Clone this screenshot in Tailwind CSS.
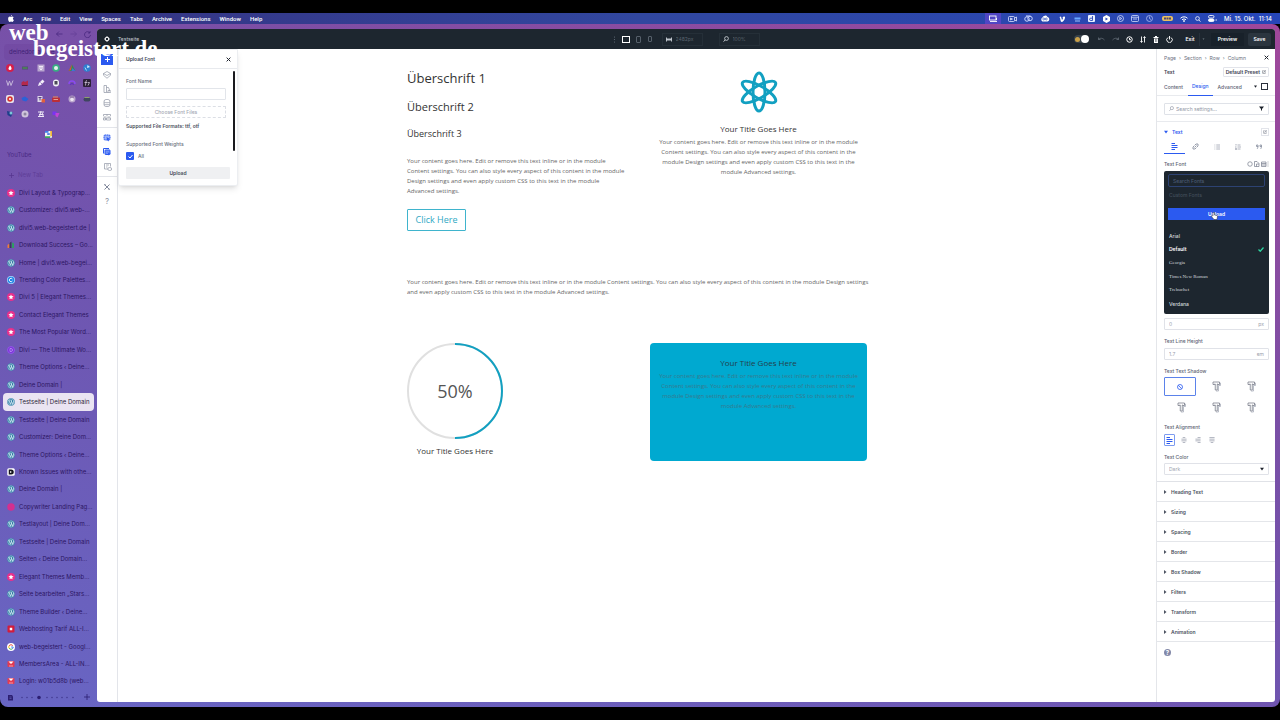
<!DOCTYPE html>
<html lang="de">
<head>
<meta charset="utf-8">
<meta name="viewport" content="width=device-width, initial-scale=1">
<title>Testseite | Deine Domain</title>
<script src="https://cdn.jsdelivr.net/npm/@tailwindcss/browser@4"></script>
</head>
<body class="bg-black font-['Inter',sans-serif] text-[5px] leading-[8px]">

<!-- Icon sprite -->
<svg class="hidden" aria-hidden="true">
  <symbol id="wp" viewBox="0 0 16 16"><circle cx="8" cy="8" r="7.5" fill="#2b7aa3"/><circle cx="8" cy="8" r="6.3" fill="none" stroke="#c7e3ee" stroke-width="1.1"/><path d="M3 5.3h2.6M4.2 5.3l2.6 7.2 2-5.6M7 5.3h3M8.4 5.3l2.6 7.2 1.9-5.2c.4-1.4-.5-2.2-1.2-2.6" fill="none" stroke="#e4f3f8" stroke-width="1.5"/></symbol>
  <symbol id="star" viewBox="0 0 16 16"><circle cx="8" cy="8" r="8" fill="#e8308c"/><path d="M8 2.8l1.5 3.4 3.7.3-2.8 2.5.8 3.7L8 10.800l-3.200 1.900.8-3.700L2.800 6.500l3.700-.3z" fill="#fff"/></symbol>
  <symbol id="pink" viewBox="0 0 16 16"><circle cx="8" cy="8" r="7.500" fill="#d42f8f"/></symbol>
  <symbol id="bars" viewBox="0 0 16 16"><path d="M1 14V8l4-3v9z" fill="#ef7b3c"/><path d="M5 14V4l4-3v13z" fill="#3a3a5c"/><path d="M10 14V3l4 2v9z" fill="#2f9e62"/></symbol>
  <symbol id="coolors" viewBox="0 0 16 16"><circle cx="8" cy="8" r="8" fill="#a8ddff"/><circle cx="8" cy="8" r="6.500" fill="#2384e6"/><path d="M10.800 6a3.400 3.400 0 1 0 0 4" fill="none" stroke="#fff" stroke-width="1.800"/></symbol>
  <symbol id="divi" viewBox="0 0 16 16"><circle cx="8" cy="8" r="7" fill="#7b35d6" stroke="#9a5cf0" stroke-width="1.500"/><path d="M6 5h2a3 3 0 0 1 0 6H6z" fill="none" stroke="#c9a4ff" stroke-width="1.300"/></symbol>
  <symbol id="known" viewBox="0 0 16 16"><rect x=".5" y=".5" width="15" height="15" rx="3" fill="#fff"/><path d="M3.500 3h5a5 5 0 0 1 0 10h-5z" fill="#16161e"/><path d="M6 6l4 2-4 2z" fill="#fff"/></symbol>
  <symbol id="host" viewBox="0 0 16 16"><rect x="1" y="1" width="14" height="14" rx="2" fill="#d21c3c"/><rect x="5.500" y="5.500" width="5" height="5" fill="#fff"/></symbol>
  <symbol id="google" viewBox="0 0 16 16"><circle cx="8" cy="8" r="8" fill="#fff"/><path d="M11.500 5.200A4.500 4.500 0 0 0 4 6" fill="none" stroke="#ea4335" stroke-width="2"/><path d="M4 6a4.500 4.500 0 0 0 0 4" fill="none" stroke="#fbbc05" stroke-width="2"/><path d="M4 10a4.500 4.500 0 0 0 7 1.300" fill="none" stroke="#34a853" stroke-width="2"/><path d="M11 11.300c1-1 1.400-2 1.400-3.300H8.300" fill="none" stroke="#4285f4" stroke-width="2"/></symbol>
  <symbol id="members" viewBox="0 0 16 16"><rect x="1" y="2" width="14" height="12" rx="2" fill="#e23a52"/><path d="M3 3l5 5 5-5z" fill="#fff"/><path d="M4 12h8" stroke="#fff" stroke-width="1"/></symbol>
  <symbol id="left" viewBox="0 0 14 14"><path d="M1 1h7M1 5h12M1 9h12M1 13h7" stroke="currentColor" stroke-width="2"/></symbol>
  <symbol id="center" viewBox="0 0 14 14"><path d="M4 1h6M1 5h12M1 9h12M4 13h6" stroke="currentColor" stroke-width="1.600"/></symbol>
  <symbol id="right" viewBox="0 0 14 14"><path d="M6 1h7M1 5h12M1 9h12M6 13h7" stroke="currentColor" stroke-width="1.600"/></symbol>
  <symbol id="justify" viewBox="0 0 14 14"><path d="M1 1h12M1 5h12M1 9h12M4 13h6" stroke="currentColor" stroke-width="1.600"/></symbol>
  <symbol id="tri" viewBox="0 0 8 8"><path d="M2 0l5 4-5 4z" fill="currentColor"/></symbol>
  <symbol id="down" viewBox="0 0 8 8"><path d="M0 1.500h8L4 7z" fill="currentColor"/></symbol>
  <symbol id="close" viewBox="0 0 8 8"><path d="M1 1l6 6M7 1L1 7" stroke="currentColor" stroke-width="1.600"/></symbol>
  <symbol id="preset" viewBox="0 0 12 12"><path d="M5 2H2v8h8V7M5 7l5-5M7 2h3v3" fill="none" stroke="currentColor" stroke-width="1.400"/></symbol>
  <symbol id="search" viewBox="0 0 12 12"><circle cx="7" cy="5" r="3.800" fill="none" stroke="currentColor" stroke-width="1.500"/><path d="M4.500 8L1 11" stroke="currentColor" stroke-width="1.700"/></symbol>
  <symbol id="shadowT" viewBox="0 0 18 22"><path d="M4 4h13v5h-4v11H8" fill="none" stroke="#a9aebb" stroke-width="1.600"/><path d="M2 2h13v5h-3V6h-1.500v12h-4V6H5v1H2z" fill="#fff" stroke="#6a6f7d" stroke-width="1.400"/></symbol>
</svg>

<div class="relative flex min-h-screen flex-col py-[13px]">

  <!-- macOS menu bar -->
  <header class="flex h-[11px] items-center justify-between bg-linear-to-r from-[#35317f] via-[#31479f] to-[#2646b8] pr-[8px] pl-[8px] font-['Roboto',sans-serif] text-[6px] font-medium text-white">
    <nav class="flex items-center gap-[9px]" aria-label="Menüleiste">
      <svg class="h-[7px] w-[6px]" viewBox="0 0 14 17" fill="#fff"><path d="M9.500 0c.2 1.800-1.300 3.400-2.900 3.400C6.400 1.700 8 .2 9.500 0zM7 4.600c.7 0 1.800-.8 3.300-.8 1.300 0 2.500.7 3.200 1.700-2.800 1.700-2.300 5.500.5 6.600-.8 2-2.200 4.600-3.900 4.600-1.200 0-1.500-.7-3-.7s-1.900.7-3.100.7C1.800 16.700 0 13 0 9.500c0-3.700 2.300-5.600 4.300-5.600 1.200 0 2.100.7 2.700.7z"/></svg>
      <a href="#" class="font-bold">Arc</a><a href="#">File</a><a href="#">Edit</a><a href="#">View</a><a href="#">Spaces</a><a href="#">Tabs</a><a href="#">Archive</a><a href="#">Extensions</a><a href="#">Window</a><a href="#">Help</a>
    </nav>
    <div class="flex items-center gap-[7px]">
      <span class="flex h-[11px] w-[16px] items-center justify-center bg-[#5046c4]"><svg class="h-[7px] w-[9px]" viewBox="0 0 18 14" fill="none" stroke="#fff" stroke-width="1.800"><rect x="1" y="2" width="13" height="8"/><path d="M2 13h14M15 6v4"/></svg></span>
      <svg class="h-[6px] w-[9px]" viewBox="0 0 18 12" fill="none" stroke="#dfe5ff" stroke-width="1.600"><rect x="1" y="1" width="12" height="10" rx="2"/><path d="M13 4l4-2v8l-4-2M5 4l4 2-4 2z"/></svg>
      <svg class="h-[7px] w-[9px]" viewBox="0 0 18 14" fill="none" stroke="#c9d4ff" stroke-width="2"><circle cx="6" cy="8" r="4.500"/><circle cx="12" cy="7" r="4.500"/><path d="M4 2h9"/></svg>
      <svg class="h-[7px] w-[10px]" viewBox="0 0 20 14"><path d="M5 13a4.500 4.500 0 0 1 0-8 5.500 5.500 0 0 1 10-1 4.600 4.600 0 0 1 0 9z" fill="#fff"/><circle cx="7.500" cy="8" r="2" fill="none" stroke="#2b48b4" stroke-width="1.300"/><circle cx="12.500" cy="8" r="2" fill="none" stroke="#2b48b4" stroke-width="1.300"/></svg>
      <svg class="ml-[2px] h-[6px] w-[7px]" viewBox="0 0 14 12"><path d="M1 2l3-1 2 7c2-2 2.500-4 1-5 2-3 6-2 5 1-1 4-4 8-7 8-2 0-2-5-3-8z" fill="#fff"/></svg>
      <svg class="ml-[1px] h-[6px] w-[7px]" viewBox="0 0 14 12"><path d="M1 3h12v4H1z" fill="#6aa8ff"/><path d="M2 10h10" stroke="#9fc3ff" stroke-width="2"/></svg>
      <svg class="h-[7px] w-[7px]" viewBox="0 0 14 14"><rect width="14" height="14" rx="2" fill="#e9efff"/><path d="M9 2v9H5.500a2.300 2.300 0 0 1 0-4.600H9" fill="none" stroke="#2946b4" stroke-width="1.800"/></svg>
      <svg class="ml-[1px] h-[8px] w-[7px]" viewBox="0 0 14 16"><path d="M7 0l7 4v8l-7 4-7-4V4z" fill="#fff"/><path d="M5 5l5 3-5 3z" fill="#2946b4"/></svg>
      <svg class="h-[7px] w-[7px]" viewBox="0 0 14 14" fill="none" stroke="#dfe5ff" stroke-width="1.500"><circle cx="7" cy="7" r="6"/><path d="M5.500 4.500l4 2.500-4 2.500z"/></svg>
      <svg class="h-[7px] w-[8px]" viewBox="0 0 16 14" fill="none" stroke="#dfe5ff" stroke-width="1.500"><rect x="1" y="1" width="14" height="12" rx="2"/><path d="M1 4.500h14M4 8h8"/></svg>
      <svg class="h-[7px] w-[7px]" viewBox="0 0 14 14" fill="none" stroke="#b7c3f5" stroke-width="1.500"><circle cx="7" cy="7" r="6"/><path d="M7 3v4l3 2"/></svg>
      <span class="ml-[2px] flex h-[5px] w-[11px] items-center justify-center rounded-[2px] bg-[#e8c061]"><svg class="h-[3px] w-[7px]" viewBox="0 0 14 6"><path d="M0 3h4M5 3h4M10 3h4" stroke="#4d4673" stroke-width="4"/></svg></span>
      <svg class="h-[6px] w-[8px]" viewBox="0 0 16 12" fill="none" stroke="#fff" stroke-width="2"><path d="M1 4.500a10 10 0 0 1 14 0M4 7.500a6 6 0 0 1 8 0"/><circle cx="8" cy="10" r="1" fill="#fff"/></svg>
      <svg class="h-[6px] w-[6px] -scale-x-100" viewBox="0 0 12 12"><use href="#search" color="#fff"/></svg>
      <svg class="h-[7px] w-[9px]" viewBox="0 0 18 14" fill="none" stroke="#fff" stroke-width="1.700"><rect x="1" y="1" width="11" height="5" rx="2.500"/><rect x="1" y="8" width="11" height="5" rx="2.500" fill="#fff"/><path d="M15 10h3"/></svg>
      <span class="font-['Inter',sans-serif] whitespace-pre">Mi. 15. Okt.  11:14</span>
    </div>
  </header>

  <!-- Browser window -->
  <div class="flex flex-1 rounded-lg bg-[linear-gradient(200deg,#a0479a,#7a4fa6_35%,#6f55b0_60%,#6866c4)] pr-[5px]">

    <!-- Browser sidebar -->
    <aside class="flex w-[97px] shrink-0 flex-col text-[6px] text-[#2c1663]">
      <div class="flex h-[20px] items-center justify-end gap-[7px] pr-[6px] text-[#4a2a80]">
        <button aria-label="Zurück"><svg class="h-[6px] w-[7px]" viewBox="0 0 14 12" fill="none" stroke="currentColor" stroke-width="1.600"><path d="M6 1L1 6l5 5M1 6h12"/></svg></button>
        <button aria-label="Vor" class="opacity-40"><svg class="h-[6px] w-[7px]" viewBox="0 0 14 12" fill="none" stroke="currentColor" stroke-width="1.600"><path d="M8 1l5 5-5 5M13 6H1"/></svg></button>
        <button aria-label="Neu laden"><svg class="h-[7px] w-[7px]" viewBox="0 0 14 14" fill="none" stroke="currentColor" stroke-width="1.600"><path d="M12 4a6 6 0 1 0 1 4M12 0v4H8"/></svg></button>
      </div>
      <div class="mx-[4px] flex h-[16px] items-center rounded-[4px] bg-[#6a3f98]/30 px-[5px] text-[#3f2275]">deinedomain.de</div>

      <!-- Pinned extensions -->
      <div class="grid h-[62px] grid-cols-6 items-center justify-items-center px-[2px]">
        <svg class="size-[8px]" viewBox="0 0 16 16"><circle cx="8" cy="8" r="8" fill="#d61f4b"/><path d="M8 3c3 3 3 5 3 6a3 3 0 0 1-6 0c0-1 1-3 3-6z" fill="#fff"/></svg>
        <svg class="size-[8px]" viewBox="0 0 16 16"><path d="M2 5h12v6H2z" fill="#50506f"/><path d="M3 8h10" stroke="#4d8a55" stroke-width="3"/></svg>
        <svg class="size-[8px]" viewBox="0 0 16 16"><rect x="1" y="1" width="14" height="14" fill="#b9a6cf"/><path d="M4 5h8M4 8h8M6 11h4" stroke="#efeaf6" stroke-width="2"/></svg>
        <svg class="size-[8px]" viewBox="0 0 16 16"><circle cx="8" cy="8" r="7.500" fill="#39ae84"/><circle cx="8" cy="8" r="4" fill="#e3f5ee"/></svg>
        <svg class="size-[8px]" viewBox="0 0 16 16"><path d="M8 1l7 13H1z" fill="#2f8d55"/><path d="M8 1L1 14l5-2z" fill="#e04a3c"/><path d="M9 8l6 6H7z" fill="#3e73d9"/></svg>
        <svg class="size-[8px]" viewBox="0 0 16 16"><circle cx="8" cy="8" r="7.500" fill="#2f7fd0"/><path d="M9 2l5 4-6 2z" fill="#d6eeff"/><path d="M4 7l3 6" stroke="#a7d6f5" stroke-width="2"/></svg>

        <svg class="size-[8px]" viewBox="0 0 16 16" fill="none" stroke="#c5b6da" stroke-width="2"><path d="M1 3l3 10 3-9 3 9 4-10"/></svg>
        <svg class="size-[8px]" viewBox="0 0 16 16"><path d="M1 7l4-3 3 2 6-3v10H1z" fill="#b4294c"/><path d="M2 13h11" stroke="#4c1d49" stroke-width="2"/></svg>
        <svg class="size-[8px]" viewBox="0 0 16 16"><path d="M2 14l2-6 7-7 4 4-7 7z" fill="#f2edf8"/><path d="M7 7l3 3" stroke="#7a55a8" stroke-width="1.500"/></svg>
        <svg class="size-[8px]" viewBox="0 0 16 16"><rect x="2" y="1" width="12" height="14" rx="6" fill="#f1f1f5"/><rect x="5" y="4" width="6" height="7" fill="#4a4a58"/></svg>
        <svg class="size-[8px]" viewBox="0 0 16 16" fill="none"><path d="M2 10a6 6 0 0 1 12 0" stroke="#8a4af0" stroke-width="3"/><path d="M5 12a3 3 0 0 1 6 0" stroke="#5d2bc4" stroke-width="2"/></svg>
        <svg class="size-[8px]" viewBox="0 0 16 16"><rect width="16" height="16" rx="2" fill="#2c2138"/><path d="M8 3c-3 0-2 3-3 10M3 7h5M9 7h4M13 7l-3 6" stroke="#d9cfe4" stroke-width="1.500" fill="none"/></svg>

        <svg class="size-[8px]" viewBox="0 0 16 16"><rect width="16" height="16" rx="4" fill="#e6e2ec"/><circle cx="8" cy="8" r="5.500" fill="#d8362f"/><circle cx="8" cy="8" r="2" fill="#fff"/></svg>
        <svg class="size-[8px]" viewBox="0 0 16 16"><path d="M1 6l7-3 7 5-5 5-7-2z" fill="#2a62d8"/></svg>
        <svg class="size-[8px]" viewBox="0 0 16 16"><rect x="1" y="2" width="10" height="12" fill="#dcd5e8"/><path d="M3 5h6M6 5v6" stroke="#5b4482" stroke-width="2"/><rect x="9" y="8" width="7" height="7" fill="#e0603d"/></svg>
        <svg class="size-[8px]" viewBox="0 0 16 16"><rect x="0" y="5" width="16" height="9" rx="2" fill="#bb2f38"/><path d="M2 4h10" stroke="#e88f5c" stroke-width="2"/><path d="M3 9h9" stroke="#f1c4b2" stroke-width="1.500"/></svg>
        <svg class="size-[8px]" viewBox="0 0 16 16"><circle cx="8" cy="8" r="7" fill="#b9a5cc"/><circle cx="8" cy="9" r="3.500" fill="#ece5f2"/><path d="M4 4h8" stroke="#6a4b85" stroke-width="1.500"/></svg>
        <svg class="size-[8px]" viewBox="0 0 16 16"><rect x="1" y="5" width="14" height="8" rx="4" fill="#3f4660"/><path d="M3 5h10" stroke="#8ca06b" stroke-width="2"/></svg>

        <svg class="size-[8px]" viewBox="0 0 16 16"><path d="M2 2l12 3-4 9-7-4z" fill="#1f3f8a"/><circle cx="10" cy="6" r="3" fill="#7cc6d8"/></svg>
        <svg class="size-[8px]" viewBox="0 0 16 16"><circle cx="8" cy="8" r="7" fill="#cfc4dc"/><circle cx="8" cy="8" r="3" fill="#8e85a0"/></svg>
        <svg class="size-[8px]" viewBox="0 0 16 16" fill="none" stroke="#ece7f5" stroke-width="2"><path d="M2 4h12M4 9h9M8 2l-3 11M10 5l3 9M2 13h12"/></svg>
        <svg class="size-[8px]" viewBox="0 0 16 16"><path d="M1 3h8v7H1z" fill="#7a35f0"/><path d="M7 6h8l-4 9-4-3z" fill="#c044d6"/></svg>
      </div>
      <div class="mx-[4px] mt-[5px] flex h-[14px] items-center justify-center rounded-[4px]">
        <svg class="size-[7px]" viewBox="0 0 16 16"><rect width="16" height="16" rx="3" fill="#f4f4f4"/><path d="M0 0h8v4H0z" fill="#3f7fe8"/><path d="M12 0h4v12h-4z" fill="#f0b938"/><path d="M0 12h12v4H0z" fill="#3fa95c"/><path d="M5 7h6" stroke="#3f7fe8" stroke-width="4"/></svg>
      </div>
      <div class="mt-[8px] h-[12px] pl-[7px] leading-[12px] text-[#4a2a84]">YouTube</div>
      <button class="mt-[8px] flex h-[12px] items-center gap-[4px] pl-[9px] text-[#57368f]"><svg class="size-[5px]" viewBox="0 0 10 10" stroke="currentColor" stroke-width="1.500"><path d="M5 0v10M0 5h10"/></svg><span class="opacity-70">New Tab</span></button>

      <nav id="tabs" class="mt-[3px] flex flex-1 flex-col" aria-label="Tabs"></nav>

      <div class="mb-[3px] flex h-[14px] items-center justify-between pr-[7px] pl-[7px] text-[#2c1f72]">
        <svg class="size-[7px]" viewBox="0 0 14 14"><path d="M2 2h8l2 3v8H2z" fill="currentColor"/><path d="M5 6h4M5 9h4" stroke="#7a78cf" stroke-width="1"/></svg>
        <svg class="h-[5px] w-[60px]" viewBox="0 0 60 5" fill="currentColor"><g opacity=".6"><circle cx="3" cy="2.500" r=".8"/><circle cx="8" cy="2.500" r=".8"/><circle cx="13" cy="2.500" r=".8"/><circle cx="28" cy="2.500" r=".8"/><circle cx="33" cy="2.500" r=".8"/><circle cx="38" cy="2.500" r=".8"/><circle cx="43" cy="2.500" r=".8"/><circle cx="48" cy="2.500" r=".8"/><circle cx="54" cy="2.500" r=".8"/></g><circle cx="20" cy="2.500" r="1.800"/></svg>
        <button aria-label="Neu"><svg class="size-[6px]" viewBox="0 0 12 12" stroke="currentColor" stroke-width="1.600"><path d="M6 0v12M0 6h12"/></svg></button>
      </div>
    </aside>

    <!-- Page builder -->
    <div class="mt-[5px] mb-[5px] flex min-w-0 flex-1 flex-col overflow-hidden rounded-[3px] bg-white">

      <header class="grid h-[20px] grid-cols-[1fr_auto_1fr] items-center bg-[#1d262f] text-white">
        <div class="flex items-center gap-[8px] pl-[7px]">
          <svg class="size-[6px]" viewBox="0 0 12 12" fill="none" stroke="#fff"><circle cx="6" cy="6" r="3.500" stroke-width="2"/><path d="M6 0v2M6 10v2M0 6h2M10 6h2M2 2l1 1M9 9l1 1M10 2L9 3M3 9l-1 1" stroke-width="1.500"/></svg>
          <span class="text-[#c4cad1]">Testseite</span>
        </div>
        <div class="flex items-center gap-[6px] text-[#59626e]">
          <svg class="h-[7px] w-[3px]" viewBox="0 0 3 7" fill="#65707c"><circle cx="1.500" cy="1" r=".6"/><circle cx="1.500" cy="3.500" r=".6"/><circle cx="1.500" cy="6" r=".6"/></svg>
          <button aria-label="Desktop" class="h-[7px] w-[8px] border border-white"></button>
          <button aria-label="Tablet" class="h-[7px] w-[5px] rounded-[1px] border border-[#56606b]"></button>
          <button aria-label="Phone" class="ml-[1px] h-[6px] w-[4px] rounded-[1px] border border-[#56606b]"></button>
          <label class="ml-[4px] flex h-[13px] w-[41px] items-center gap-[4px] border border-[#252f38] pl-[3px]"><svg class="h-[5px] w-[6px] shrink-0" viewBox="0 0 12 10" stroke="#cdd3da" stroke-width="1.800" fill="none"><path d="M1 1v8M11 1v8M2 5h8M5 2L2 5l3 3M7 2l3 3-3 3"/></svg><input aria-label="Breite" class="w-full min-w-0 bg-transparent" value="2482px"></label>
          <label class="ml-[10px] flex h-[13px] w-[41px] items-center gap-[4px] border border-[#252f38] pl-[3px]"><svg class="size-[6px] shrink-0 text-[#dfe3e8]"><use href="#search"/></svg><input aria-label="Zoom" class="w-full min-w-0 bg-transparent" value="100%"></label>
        </div>
        <div class="flex items-center justify-end gap-[7px] pr-[4px] font-semibold">
          <label class="flex h-[8px] w-[15px] cursor-pointer items-center justify-between rounded-full bg-[#37414a] pl-[1px]"><input type="checkbox" checked aria-label="Heller Modus" class="size-[5px] appearance-none rounded-full bg-[#c9a048]"><span class="size-[8px] rounded-full bg-white"></span></label>
          <button aria-label="Rückgängig" class="ml-[2px]"><svg class="h-[5px] w-[7px]" viewBox="0 0 14 10" fill="none" stroke="#69737e" stroke-width="1.500"><path d="M1 1v4h4M1 5c4-4 8-3 12 1"/></svg></button>
          <button aria-label="Wiederholen"><svg class="h-[5px] w-[7px]" viewBox="0 0 14 10" fill="none" stroke="#69737e" stroke-width="1.500"><path d="M13 1v4H9M13 5C9 1 5 2 1 6"/></svg></button>
          <button aria-label="Verlauf"><svg class="size-[7px]" viewBox="0 0 14 14" fill="none" stroke="#fff" stroke-width="2"><circle cx="7" cy="7" r="5.500"/><path d="M7 4v3.500h3"/></svg></button>
          <button aria-label="Portabilität"><svg class="h-[7px] w-[6px]" viewBox="0 0 12 14" fill="none" stroke="#fff" stroke-width="1.800"><path d="M3 1v11M1 10l2 3 2-3M9 13V2M7 4l2-3 2 3"/></svg></button>
          <button aria-label="Löschen"><svg class="h-[7px] w-[6px]" viewBox="0 0 12 14"><path d="M1 2h10v2H1zM4 0h4v2H4zM2 5h8v9H2z" fill="#fff"/><path d="M5 6v6M7.500 6v6" stroke="#1d262f" stroke-width=".9"/></svg></button>
          <button aria-label="Beenden"><svg class="size-[7px]" viewBox="0 0 14 14" fill="none" stroke="#fff" stroke-width="1.900"><path d="M4 3a5.500 5.500 0 1 0 6 0M7 0v7"/></svg></button>
          <div class="ml-[1px] flex items-center">
            <button class="h-[14px] w-[18px]">Exit</button>
            <button aria-label="Mehr" class="flex h-[13px] w-[8px] items-center justify-center border-l border-[#27313b] text-[#7b858f]"><svg class="h-[2px] w-[3px]"><use href="#down"/></svg></button>
            <button class="ml-[4px] h-[13px] w-[33px] bg-[#18212a]">Preview</button>
            <button class="ml-[4px] h-[13px] w-[23px] rounded-[2px] bg-[#2b353f]">Save</button>
          </div>
        </div>
      </header>

      <div class="relative flex flex-1">
        <!-- Tool rail -->
        <nav class="flex w-[21px] shrink-0 flex-col items-center border-r border-[#e3e5ea] text-[#8f95a5]" aria-label="Werkzeuge">
          <button aria-label="Hinzufügen" class="mt-[5px] flex h-[11px] w-[12px] items-center justify-center bg-[#2b5af0]"><svg class="size-[5px]" viewBox="0 0 10 10" stroke="#fff" stroke-width="2"><path d="M5 0v10M0 5h10"/></svg></button>
          <button aria-label="Ebenen" class="mt-[6px]"><svg class="size-[8px]" viewBox="0 0 16 16" fill="none" stroke="currentColor" stroke-width="1.400"><path d="M8 1l7 4-7 4-7-4zM1 8.500l7 6 7-6M1 5v3.500M15 5v3.500"/></svg></button>
          <button aria-label="Stile" class="mt-[6px]"><svg class="size-[8px]" viewBox="0 0 16 16" fill="none" stroke="currentColor" stroke-width="1.400"><path d="M2 1h5v14H2zM7 5h4l4 10H7M10 15v-4h5"/></svg></button>
          <button aria-label="Daten" class="mt-[6px]"><svg class="size-[8px]" viewBox="0 0 16 16" fill="none" stroke="currentColor" stroke-width="1.400"><rect x="2" y="1" width="12" height="14" rx="4"/><path d="M2 6c3 2 9 2 12 0M2 10c3 2 9 2 12 0"/></svg></button>
          <button aria-label="Felder" class="mt-[6px]"><svg class="size-[8px]" viewBox="0 0 16 16" fill="none" stroke="currentColor" stroke-width="1.400"><path d="M1 3h14M1 3v3M8 3v3M15 3v3M1 8h6M9 8h6M1 10h4v4H1zM7 10h8v4H7z"/></svg></button>
          <span class="mt-[6px] h-px w-full bg-[#e3e5ea]"></span>
          <button aria-label="Auswahl" class="mt-[6px] text-[#2b5af0]"><svg class="size-[8px]" viewBox="0 0 16 16"><rect x="2" y="2" width="12" height="10" rx="2" fill="#9db4fa" stroke="currentColor" stroke-width="2" stroke-dasharray="3 1"/><path d="M7 6l7 4-3 1 1 4-4-3z" fill="currentColor"/></svg></button>
          <button aria-label="Mehrfachauswahl" class="mt-[6px] text-[#2b5af0]"><svg class="size-[8px]" viewBox="0 0 16 16"><path d="M1 11V1h11" fill="none" stroke="currentColor" stroke-width="2"/><rect x="4" y="4" width="10" height="9" rx="1" fill="#6f90f7" stroke="currentColor" stroke-width="2"/><path d="M9 8l6 4-3 1v3z" fill="currentColor"/></svg></button>
          <button aria-label="Ausblenden" class="mt-[7px] ml-[2px]"><svg class="size-[8px]" viewBox="0 0 16 16" fill="none" stroke="currentColor" stroke-width="1.400"><path d="M8 12H1V1h12v6M4 4h6M4 8h3"/><ellipse cx="11.500" cy="12" rx="4" ry="3"/></svg></button>
          <span class="mt-[5px] h-px w-full bg-[#e3e5ea]"></span>
          <button aria-label="Tools" class="mt-[7px] text-[#737a90]"><svg class="size-[6px]" viewBox="0 0 12 12" stroke="currentColor" stroke-width="1.800"><path d="M1 1l10 10M11 1L1 11M0 3l3-3M9 12l3-3"/></svg></button>
          <button class="mt-[7px] text-[8px] leading-[8px]">?</button>
        </nav>

        <!-- Canvas -->
        <main class="min-w-0 flex-1 font-['Open_Sans',sans-serif] text-[6px] leading-[10px] text-[#666]">
          <div class="mx-auto w-[460px] pt-[19px] whitespace-nowrap">
            <div class="grid grid-cols-2 gap-[26px]">
              <div>
                <h1 class="text-[13px] leading-[20px] text-[#333]">Überschrift 1</h1>
                <h2 class="mt-[9px] text-[11px] leading-[20px] text-[#333]">Überschrift 2</h2>
                <h3 class="mt-[7px] text-[9px] leading-[20px] text-[#333]">Überschrift 3</h3>
                <p class="mt-[12px]">Your content goes here. Edit or remove this text inline or in the module<br>Content settings. You can also style every aspect of this content in the module<br>Design settings and even apply custom CSS to this text in the module<br>Advanced settings.</p>
                <a href="#" class="mt-[13px] inline-flex h-[22px] w-[59px] items-center justify-center rounded-[1px] border border-[#3fb4cd] text-[9px] text-[#2fa9c4]">Click Here</a>
              </div>
              <div class="flex flex-col items-center pt-[3px] text-center">
                <svg class="h-[42px] w-[38px]" viewBox="0 0 38 42" fill="none" stroke="#12a0c1" stroke-width="3"><ellipse cx="19" cy="21" rx="6" ry="19"/><ellipse cx="19" cy="21" rx="6" ry="19" transform="rotate(60 19 21)"/><ellipse cx="19" cy="21" rx="6" ry="19" transform="rotate(120 19 21)"/></svg>
                <h4 class="mt-[11px] text-[8px] leading-[10px] text-[#333]">Your Title Goes Here</h4>
                <p class="mt-[3px]">Your content goes here. Edit or remove this text inline or in the module<br>Content settings. You can also style every aspect of this content in the<br>module Design settings and even apply custom CSS to this text in the<br>module Advanced settings.</p>
              </div>
            </div>
            <p class="mt-[46px]">Your content goes here. Edit or remove this text inline or in the module Content settings. You can also style every aspect of this content in the module Design settings<br>and even apply custom CSS to this text in the module Advanced settings.</p>
            <div class="mt-[46px] grid grid-cols-2 gap-[26px]">
              <div class="w-[96px] text-center">
                <div class="relative">
                  <svg class="size-[96px]" viewBox="0 0 96 96" fill="none" stroke-width="2"><circle cx="48" cy="48" r="47" stroke="#e0e0e0"/><path d="M48 1a47 47 0 0 1 0 94" stroke="#12a0c1"/></svg>
                  <span class="absolute inset-0 flex items-center justify-center text-[18px] text-[#555]">50%</span>
                </div>
                <h4 class="mt-[7px] text-[8px] leading-[10px] text-[#333]">Your Title Goes Here</h4>
              </div>
              <div class="h-[118px] rounded-[4px] bg-[#00a9d0] pt-[15px] text-center text-[#38798e]">
                <h4 class="text-[8px] leading-[10px] text-[#24404a]">Your Title Goes Here</h4>
                <p class="mt-[3px]">Your content goes here. Edit or remove this text inline or in the module<br>Content settings. You can also style every aspect of this content in the<br>module Design settings and even apply custom CSS to this text in the<br>module Advanced settings.</p>
              </div>
            </div>
          </div>
        </main>

        <!-- Settings panel -->
        <aside class="flex w-[119px] shrink-0 flex-col border-l border-[#e4e6ea] text-[#5d6373]">
          <div class="flex h-[17px] items-center justify-between pr-[6px] pl-[7px]">
            <nav class="flex items-center gap-[3px] text-[#6b7180]" aria-label="Pfad"><a href="#">Page</a><span>›</span><a href="#">Section</a><span>›</span><a href="#">Row</a><span>›</span><a href="#">Column</a></nav>
            <button aria-label="Schließen" class="text-[#1d222c]"><svg class="size-[5px]"><use href="#close"/></svg></button>
          </div>
          <div class="flex h-[12px] items-center justify-between pr-[6px] pl-[7px] font-semibold text-[#3c4251]">
            <h2 class="text-[5px]">Text</h2>
            <button class="flex h-[10px] items-center gap-[2px] rounded-[1px] border border-[#e2e4ea] px-[2px]">Default Preset<svg class="size-[4px]"><use href="#preset"/></svg></button>
          </div>
          <div class="flex h-[18px] items-center border-b border-[#e8eaee] pr-[7px] pl-[7px] font-medium" role="tablist">
            <button role="tab">Content</button>
            <button role="tab" aria-selected="true" class="ml-[5px] h-[18px] border-b border-[#2b5af0] px-[4px] text-[#2b5af0]">Design</button>
            <button role="tab" class="ml-[5px]">Advanced</button>
            <button aria-label="Menü" class="ml-auto text-[#1d222c]"><svg class="size-[3px]"><use href="#down"/></svg></button>
            <button aria-label="Fenster" class="ml-[4px] size-[7px] border border-[#2b303c]"></button>
          </div>
          <div class="flex h-[26px] items-center border-b border-[#e8eaee] pr-[6px] pl-[7px]">
            <label class="flex h-[12px] w-full items-center gap-[2px] rounded-[1px] border border-[#dfe2e8] px-[4px] text-[#9298a6]"><svg class="size-[5px] shrink-0"><use href="#search"/></svg><input type="search" aria-label="Search settings" placeholder="Search settings..." class="w-full min-w-0 bg-transparent placeholder:text-[#9298a6]"><svg class="size-[5px] shrink-0" viewBox="0 0 10 10"><path d="M0 1h10L6 6v4L4 8V6z" fill="#1d222c"/></svg></label>
          </div>

          <section class="flex flex-col border-b border-[#e0e2e7] pr-[6px] pl-[7px] pb-[6px] font-medium">
            <div class="flex h-[17px] items-center justify-between pt-[3px]">
              <button class="flex items-center gap-[4px] font-semibold text-[#2b5af0]"><svg class="size-[4px]"><use href="#down"/></svg>Text</button>
              <button aria-label="Preset" class="flex size-[8px] items-center justify-center border border-[#e2e4ea] text-[#596070]"><svg class="size-[4px]"><use href="#preset"/></svg></button>
            </div>
            <div class="grid h-[15px] grid-cols-5 text-[#8d93a3]" role="tablist">
              <button aria-label="Text" class="flex items-center justify-center border-b border-[#2b5af0] text-[#2b5af0]"><svg class="size-[7px]"><use href="#left"/></svg></button>
              <button aria-label="Link" class="flex items-center justify-center"><svg class="size-[7px]" viewBox="0 0 14 14" fill="none" stroke="currentColor" stroke-width="1.800"><path d="M5 9l4-4M6 4l2-2h4v4l-3 3M8 10l-2 2H2V8l3-3"/></svg></button>
              <button aria-label="Liste" class="flex items-center justify-center"><svg class="size-[6px]" viewBox="0 0 12 12" stroke="currentColor" stroke-width="1.400"><path d="M1 2h1.500M4.500 2H12M1 6h1.500M4.500 6H12M1 10h1.500M4.500 10H12"/></svg></button>
              <button aria-label="Nummerierte Liste" class="flex items-center justify-center"><svg class="size-[6px]" viewBox="0 0 12 12" fill="none" stroke="currentColor" stroke-width="1.400"><path d="M5 2h6M0 6h3M5 6h7M5 10h6M2 0v3M1 9h2v2H1z"/></svg></button>
              <button aria-label="Zitat" class="flex items-center justify-center"><svg class="size-[6px]" viewBox="0 0 12 12" fill="none" stroke="currentColor" stroke-width="1.700"><path d="M1 2h3v3H1zM4 4c0 3-1 5-2 6M8 2h3v3H8zM11 4c0 3-1 5-2 6"/></svg></button>
            </div>
            <div class="flex h-[17px] items-center justify-between pt-[3px]">
              <span>Text Font</span>
              <svg class="h-[6px] w-[22px]" viewBox="0 0 44 12" fill="none" stroke="#777d8c" stroke-width="1.400"><circle cx="6" cy="6" r="4.500"/><path d="M15 1h5l4 4v6h-9zM19 11V6h5M29 2h9v9h-9zM29 5h9M29 8h9M42 1v2M42 5v2M42 9v2"/></svg>
            </div>

            <!-- Font menu -->
            <div class="flex h-[143px] flex-col rounded-[2px] bg-[#1d262f] px-[4px] text-[#d5dade]">
              <input aria-label="Search Fonts" placeholder="Search Fonts" class="mt-[3px] h-[13px] shrink-0 rounded-[2px] border border-[#2d4272] px-[4px] placeholder:text-[#4b5a72]">
              <p class="mt-[4px] pl-[1px] text-[#414d5a]">Custom Fonts</p>
              <button class="mt-[9px] h-[12px] shrink-0 bg-[#2b5af0] font-semibold text-white">Upload</button>
              <ul class="mt-[9px] grid flex-1 grid-rows-6 items-center pb-[3px] pl-[1px]">
                <li>Arial</li>
                <li class="flex items-center justify-between font-semibold text-white">Default<svg class="mr-[1px] h-[5px] w-[6px]" viewBox="0 0 12 10" fill="none" stroke="#2fd3a0" stroke-width="2.600"><path d="M1 5l3.500 3.500L11 1"/></svg></li>
                <li class="font-['Liberation_Serif',serif] font-normal">Georgia</li>
                <li class="font-['Liberation_Serif',serif] font-normal">Times New Roman</li>
                <li class="font-['Liberation_Serif',serif] font-normal">Trebuchet</li>
                <li>Verdana</li>
              </ul>
            </div>

            <label class="mt-[4px] flex h-[12px] items-center rounded-[1px] border border-[#e0e2e8] px-[4px] font-normal text-[#9aa0ad]"><input aria-label="Text Letter Spacing" class="w-full min-w-0" value="0">px</label>
            <label for="lh" class="mt-[7px]">Text Line Height</label>
            <div class="mt-[3px] flex h-[12px] items-center rounded-[1px] border border-[#e0e2e8] px-[4px] font-normal text-[#9aa0ad]"><input id="lh" class="w-full min-w-0" value="1.7">em</div>
            <span class="mt-[7px]">Text Text Shadow</span>
            <div class="mt-[2px] grid grid-cols-3 items-center justify-items-center">
              <button aria-label="Kein Schatten" class="flex h-[19px] w-[32px] items-center justify-center justify-self-start rounded-[1px] border border-[#5b82ea]"><svg class="size-[6px]" viewBox="0 0 12 12" fill="none" stroke="#2b5af0" stroke-width="1.600"><circle cx="6" cy="6" r="5"/><path d="M2.500 2.500l7 7"/></svg></button>
              <button aria-label="Schatten 1"><svg class="h-[11px] w-[9px]"><use href="#shadowT"/></svg></button>
              <button aria-label="Schatten 2"><svg class="h-[11px] w-[9px]"><use href="#shadowT"/></svg></button>
              <button aria-label="Schatten 3" class="mt-[6px]"><svg class="h-[11px] w-[9px]"><use href="#shadowT"/></svg></button>
              <button aria-label="Schatten 4" class="mt-[6px]"><svg class="h-[11px] w-[9px]"><use href="#shadowT"/></svg></button>
              <button aria-label="Schatten 5" class="mt-[6px]"><svg class="h-[11px] w-[9px]"><use href="#shadowT"/></svg></button>
            </div>
            <span class="mt-[10px]">Text Alignment</span>
            <div class="mt-[3px] flex items-center gap-[8px] text-[#8d93a3]">
              <button aria-label="Links" class="-mr-[2px] flex h-[12px] w-[11px] items-center justify-center rounded-[1px] border border-[#7d9bf0] text-[#2b5af0]"><svg class="size-[7px]"><use href="#left"/></svg></button>
              <button aria-label="Zentriert"><svg class="size-[6px]"><use href="#center"/></svg></button>
              <button aria-label="Rechts"><svg class="size-[6px]"><use href="#right"/></svg></button>
              <button aria-label="Blocksatz"><svg class="size-[6px]"><use href="#justify"/></svg></button>
            </div>
            <label for="tc" class="mt-[7px]">Text Color</label>
            <div class="mt-[2px] flex h-[12px] items-center rounded-[1px] border border-[#e0e2e8] pr-[4px] font-normal text-[#9aa0ad]"><select id="tc" class="w-full appearance-none bg-transparent pl-[4px]"><option>Dark</option><option>Light</option></select><svg class="size-[4px] shrink-0 text-[#1d222c]"><use href="#down"/></svg></div>
          </section>

          <div class="flex flex-col font-semibold text-[#4b5160]">
            <button class="flex h-[20px] items-center gap-[4px] border-b border-[#e4e6ea] pl-[6px]"><svg class="size-[4px]"><use href="#tri"/></svg>Heading Text</button>
            <button class="flex h-[20px] items-center gap-[4px] border-b border-[#e4e6ea] pl-[6px]"><svg class="size-[4px]"><use href="#tri"/></svg>Sizing</button>
            <button class="flex h-[20px] items-center gap-[4px] border-b border-[#e4e6ea] pl-[6px]"><svg class="size-[4px]"><use href="#tri"/></svg>Spacing</button>
            <button class="flex h-[20px] items-center gap-[4px] border-b border-[#e4e6ea] pl-[6px]"><svg class="size-[4px]"><use href="#tri"/></svg>Border</button>
            <button class="flex h-[20px] items-center gap-[4px] border-b border-[#e4e6ea] pl-[6px]"><svg class="size-[4px]"><use href="#tri"/></svg>Box Shadow</button>
            <button class="flex h-[20px] items-center gap-[4px] border-b border-[#e4e6ea] pl-[6px]"><svg class="size-[4px]"><use href="#tri"/></svg>Filters</button>
            <button class="flex h-[20px] items-center gap-[4px] border-b border-[#e4e6ea] pl-[6px]"><svg class="size-[4px]"><use href="#tri"/></svg>Transform</button>
            <button class="flex h-[20px] items-center gap-[4px] border-b border-[#e4e6ea] pl-[6px]"><svg class="size-[4px]"><use href="#tri"/></svg>Animation</button>
          </div>
          <button aria-label="Hilfe" class="mt-[7px] ml-[7px] size-[7px] rounded-full bg-[#8288a8] text-[6px] leading-[7px] font-bold text-white">?</button>
        </aside>

        <!-- Upload dialog -->
        <div role="dialog" aria-labelledby="dlg" class="absolute top-0 left-[21px] flex h-[137px] w-[120px] flex-col rounded-b-[2px] border border-[#eceef1] bg-white text-[#6b7080] shadow-md">
          <div class="flex h-[19px] shrink-0 items-center justify-between border-b border-[#e8eaee] pr-[6px] pl-[7px] text-[#454b59]">
            <h2 id="dlg" class="font-semibold">Upload Font</h2>
            <button aria-label="Schließen" class="text-[#1d222c]"><svg class="size-[5px]"><use href="#close"/></svg></button>
          </div>
          <div class="flex flex-1 pl-[7px]">
            <form class="flex flex-1 flex-col items-start pt-[8px] font-medium">
              <label for="fn">Font Name</label>
              <input id="fn" class="mt-[3px] h-[12px] w-[100px] rounded-[1px] border border-[#e2e5ea]">
              <button type="button" class="mt-[6px] h-[12px] w-[100px] rounded-[1px] border border-dashed border-[#dcdfe5] text-[#a4a9b4]">Choose Font Files</button>
              <p class="mt-[4px] font-semibold text-[#4b5160]">Supported File Formats: ttf, otf</p>
              <p class="mt-[10px]">Supported Font Weights</p>
              <label class="mt-[4px] flex items-center gap-[4px]"><span class="grid size-[8px]"><input type="checkbox" checked class="col-start-1 row-start-1 size-[8px] appearance-none rounded-[1px] bg-[#2b5af0]"><svg class="pointer-events-none col-start-1 row-start-1 m-auto size-[5px]" viewBox="0 0 10 10" fill="none" stroke="#fff" stroke-width="2"><path d="M1 5l3 3 5-6"/></svg></span>All</label>
              <button type="button" class="mt-[7px] h-[12px] w-[104px] rounded-[1px] bg-[#eff0f2] font-semibold text-[#454b59]">Upload</button>
            </form>
            <div class="mt-[2px] mr-[2px] h-[80px] w-[2px] rounded-full bg-[#1a1a1e]"></div>
          </div>
        </div>
      </div>
    </div>
  </div>

  <!-- Pointer over the Upload button -->
  <svg class="pointer-events-none absolute top-[212px] right-[62px] h-[8px] w-[7px]" viewBox="0 0 14 16"><path d="M4 8V2a1.500 1.500 0 0 1 3 0v4l5 1c1 .3 1 1 1 2l-1 6H6L1 9c0-1 1-2 3-1z" fill="#fff" stroke="#222" stroke-width="1"/></svg>

  <!-- Watermark -->
  <div class="pointer-events-none absolute top-[25px] left-[9px] font-['Liberation_Serif',serif] text-[23px] leading-[16px] font-bold text-white">web<br><span class="ml-[24px]">begeistert.de</span></div>
</div>

<script>
const tabs = [
  ["star", "Divi Layout & Typograp..."], ["wp", "Customizer: divi5.web-..."], ["wp", "divi5.web-begeistert.de |"],
  ["bars", "Download Success – Go..."], ["wp", "Home | divi5.web-begei..."], ["coolors", "Trending Color Palettes..."],
  ["star", "Divi 5 | Elegant Themes..."], ["star", "Contact Elegant Themes"], ["star", "The Most Popular Word..."],
  ["divi", "Divi — The Ultimate Wo..."], ["wp", "Theme Options ‹ Deine..."], ["wp", "Deine Domain |"],
  ["wp", "Testseite | Deine Domain", true], ["wp", "Testseite | Deine Domain"], ["wp", "Customizer: Deine Dom..."],
  ["wp", "Theme Options ‹ Deine..."], ["known", "Known Issues with othe..."], ["wp", "Deine Domain |"],
  ["pink", "Copywriter Landing Pag..."], ["wp", "Testlayout | Deine Dom..."], ["wp", "Testseite | Deine Domain"],
  ["wp", "Seiten ‹ Deine Domain..."], ["star", "Elegant Themes Memb..."], ["wp", "Seite bearbeiten „Stars..."],
  ["wp", "Theme Builder ‹ Deine..."], ["host", "Webhosting Tarif ALL-I..."], ["google", "web-begeistert - Googl..."],
  ["members", "MembersArea - ALL-IN..."], ["members", "Login: w01b5d8b (web..."]
];
const idle = "mx-[3px] flex flex-1 items-center gap-[4px] rounded-[4px] pl-[4px] whitespace-nowrap";
const active = "mx-[3px] flex flex-1 items-center gap-[4px] rounded-[4px] bg-[#eae4f2] pl-[4px] whitespace-nowrap text-[#2b2436]";
const nav = document.getElementById("tabs");
for (const [icon, title, current] of tabs) {
  const a = document.createElement("a");
  a.href = "#";
  a.className = current ? active : idle;
  a.innerHTML = `<svg class="size-[8px] shrink-0"><use href="#${icon}"/></svg>`;
  a.append(title);
  nav.append(a);
}
</script>
</body>
</html>
